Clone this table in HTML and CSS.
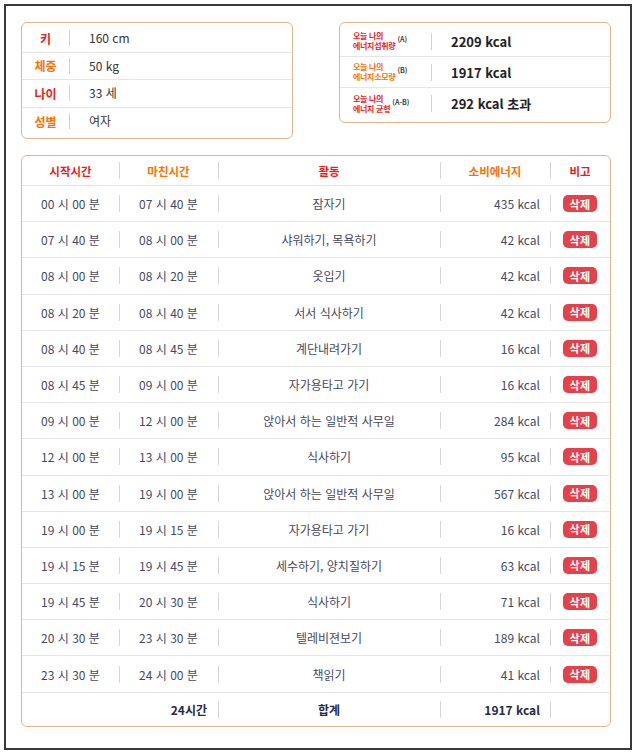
FILE: index.html
```html
<!DOCTYPE html>
<html lang="ko">
<head>
<meta charset="utf-8">
<title>에너지 소비</title>
<link rel="stylesheet" href="styles.css">
</head>
<body>
<div class="frame">
  <div class="top">
    <div class="panel profile">
      <div class="prow"><div class="plabel red">키</div><div class="pval">160 cm</div></div>
      <div class="prow"><div class="plabel orange">체중</div><div class="pval">50 kg</div></div>
      <div class="prow"><div class="plabel red">나이</div><div class="pval">33 세</div></div>
      <div class="prow"><div class="plabel orange">성별</div><div class="pval">여자</div></div>
    </div>
    <div class="panel energy">
      <div class="erow"><div class="elabel"><span class="etxt red">오늘 나의<br>에너지섭취량</span><span class="esup">(A)</span></div><div class="eval">2209 kcal</div></div>
      <div class="erow"><div class="elabel"><span class="etxt orange">오늘 나의<br>에너지소모량</span><span class="esup">(B)</span></div><div class="eval">1917 kcal</div></div>
      <div class="erow"><div class="elabel"><span class="etxt red">오늘 나의<br>에너지 균형</span><span class="esup">(A-B)</span></div><div class="eval">292 kcal 초과</div></div>
    </div>
  </div>

  <div class="table">
    <div class="row head">
      <div class="c c1 red">시작시간</div>
      <div class="c c2 orange div">마친시간</div>
      <div class="c c3 red div">활동</div>
      <div class="c c4h orange div">소비에너지</div>
      <div class="c c5 red div">비고</div>
    </div>
    <div class="row"><div class="c c1">00 시 00 분</div><div class="c c2 div">07 시 40 분</div><div class="c c3 div">잠자기</div><div class="c c4 div">435 kcal</div><div class="c c5 div"><span class="del">삭제</span></div></div>
    <div class="row"><div class="c c1">07 시 40 분</div><div class="c c2 div">08 시 00 분</div><div class="c c3 div">샤워하기, 목욕하기</div><div class="c c4 div">42 kcal</div><div class="c c5 div"><span class="del">삭제</span></div></div>
    <div class="row"><div class="c c1">08 시 00 분</div><div class="c c2 div">08 시 20 분</div><div class="c c3 div">옷입기</div><div class="c c4 div">42 kcal</div><div class="c c5 div"><span class="del">삭제</span></div></div>
    <div class="row"><div class="c c1">08 시 20 분</div><div class="c c2 div">08 시 40 분</div><div class="c c3 div">서서 식사하기</div><div class="c c4 div">42 kcal</div><div class="c c5 div"><span class="del">삭제</span></div></div>
    <div class="row"><div class="c c1">08 시 40 분</div><div class="c c2 div">08 시 45 분</div><div class="c c3 div">계단내려가기</div><div class="c c4 div">16 kcal</div><div class="c c5 div"><span class="del">삭제</span></div></div>
    <div class="row"><div class="c c1">08 시 45 분</div><div class="c c2 div">09 시 00 분</div><div class="c c3 div">자가용타고 가기</div><div class="c c4 div">16 kcal</div><div class="c c5 div"><span class="del">삭제</span></div></div>
    <div class="row"><div class="c c1">09 시 00 분</div><div class="c c2 div">12 시 00 분</div><div class="c c3 div">앉아서 하는 일반적 사무일</div><div class="c c4 div">284 kcal</div><div class="c c5 div"><span class="del">삭제</span></div></div>
    <div class="row"><div class="c c1">12 시 00 분</div><div class="c c2 div">13 시 00 분</div><div class="c c3 div">식사하기</div><div class="c c4 div">95 kcal</div><div class="c c5 div"><span class="del">삭제</span></div></div>
    <div class="row"><div class="c c1">13 시 00 분</div><div class="c c2 div">19 시 00 분</div><div class="c c3 div">앉아서 하는 일반적 사무일</div><div class="c c4 div">567 kcal</div><div class="c c5 div"><span class="del">삭제</span></div></div>
    <div class="row"><div class="c c1">19 시 00 분</div><div class="c c2 div">19 시 15 분</div><div class="c c3 div">자가용타고 가기</div><div class="c c4 div">16 kcal</div><div class="c c5 div"><span class="del">삭제</span></div></div>
    <div class="row"><div class="c c1">19 시 15 분</div><div class="c c2 div">19 시 45 분</div><div class="c c3 div">세수하기, 양치질하기</div><div class="c c4 div">63 kcal</div><div class="c c5 div"><span class="del">삭제</span></div></div>
    <div class="row"><div class="c c1">19 시 45 분</div><div class="c c2 div">20 시 30 분</div><div class="c c3 div">식사하기</div><div class="c c4 div">71 kcal</div><div class="c c5 div"><span class="del">삭제</span></div></div>
    <div class="row"><div class="c c1">20 시 30 분</div><div class="c c2 div">23 시 30 분</div><div class="c c3 div">텔레비젼보기</div><div class="c c4 div">189 kcal</div><div class="c c5 div"><span class="del">삭제</span></div></div>
    <div class="row"><div class="c c1">23 시 30 분</div><div class="c c2 div">24 시 00 분</div><div class="c c3 div">책읽기</div><div class="c c4 div">41 kcal</div><div class="c c5 div"><span class="del">삭제</span></div></div>
    <div class="row total">
      <div class="c c12">24시간</div>
      <div class="c c3 div">합계</div>
      <div class="c c4 div">1917 kcal</div>
      <div class="c c5 div"></div>
    </div>
  </div>
</div>
</body>
</html>
```

FILE: styles.css
```css
* { box-sizing: border-box; }
html, body { margin: 0; padding: 0; background: #fff; }
body {
  font-family: "Noto Sans CJK KR", "Noto Sans", sans-serif;
  font-size: 12px;
  color: #444a60;
}
.frame {
  margin: 4px;
  width: 628px;
  height: 746px;
  border: 2px solid #3a3a3a;
  padding: 16px 19px 0 15px;
}
.red { color: #ec1c1c; }
.orange { color: #f87304; }

.top {
  display: flex;
  justify-content: space-between;
  align-items: flex-start;
}
.panel {
  width: 272px;
  border: 1px solid #e2b58a;
  border-radius: 6px;
  background: #fff;
}
.profile { padding: 2px 0 3px; }
.prow {
  display: flex;
  align-items: center;
  height: 27.5px;
  border-bottom: 1px solid #e6e6e6;
}
.prow:last-child { border-bottom: 0; }
.plabel {
  width: 47px;
  text-align: center;
  font-weight: bold;
  font-size: 12px;
}
.pval {
  flex: 1;
  padding-left: 20px;
  color: #333;
  background: linear-gradient(#d2d2d2, #d2d2d2) left center / 1px 16px no-repeat;
  line-height: 16px;
}

.energy { padding: 3px 0; }
.erow {
  display: flex;
  align-items: center;
  height: 31px;
  border-bottom: 1px solid #e6e6e6;
}
.erow:last-child { border-bottom: 0; }
.elabel {
  width: 91px;
  padding-left: 13px;
  display: flex;
  align-items: center;
  gap: 2px;
}
.etxt {
  font-size: 8px;
  line-height: 10px;
  font-weight: bold;
  white-space: nowrap;
  letter-spacing: -0.3px;
}
.esup {
  font-size: 7px;
  font-weight: bold;
  color: #444;
  margin-top: -4px;
}
.eval {
  flex: 1;
  padding-left: 20px;
  font-size: 13px;
  font-weight: bold;
  color: #222;
  line-height: 17px;
  background: linear-gradient(#d2d2d2, #d2d2d2) left center / 1px 17px no-repeat;
}

.table {
  margin-top: 16px;
  width: 590px;
  border: 1px solid #e2b58a;
  border-radius: 6px;
  overflow: hidden;
}
.row {
  display: grid;
  grid-template-columns: 97px 99px 222px 110px 1fr;
  height: 36.2px;
  border-bottom: 1px solid #e4e4e4;
}
.row.head {
  height: 30px;
  font-weight: bold;
  font-size: 11.5px;
}
.row.total {
  grid-template-columns: 196px 222px 110px 1fr;
  border-bottom: 0;
  height: 33px;
  font-weight: bold;
  color: #252b45;
}
.c {
  display: flex;
  align-items: center;
  justify-content: center;
  white-space: nowrap;
}
.div {
  background: linear-gradient(#d6d6d6, #d6d6d6) left center / 1px 17px no-repeat;
}
.c4 {
  justify-content: flex-end;
  padding-right: 10px;
}
.c12 {
  justify-content: flex-end;
  padding-right: 11px;
}
.del {
  display: inline-flex;
  align-items: center;
  justify-content: center;
  width: 34px;
  height: 17px;
  border-radius: 5px;
  background: #e5414a;
  color: #fff;
  font-size: 11px;
  font-weight: bold;
  letter-spacing: 0.5px;
}
```
